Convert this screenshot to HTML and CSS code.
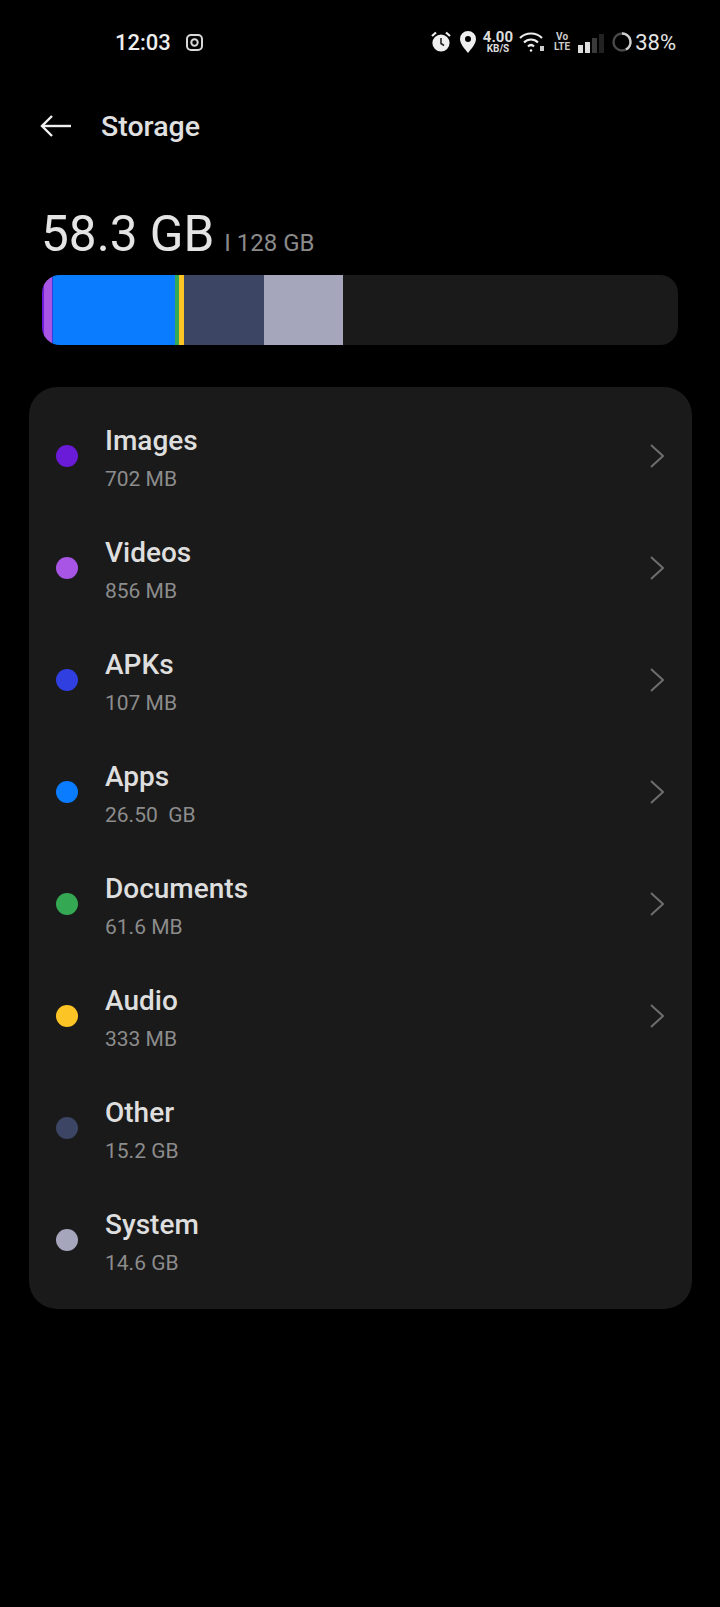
FILE: index.html
```html
<!DOCTYPE html>
<html lang="en">
<head>
    <meta charset="UTF-8">
    <meta name="viewport" content="width=device-width, initial-scale=1.0">
    <title>Storage</title>
    <link rel="stylesheet" href="styles.css">
</head>
<body>

    <div class="status-bar">
        <div class="status-left">
            <span class="clock">12:03</span>
            <svg class="insta" width="17" height="17" viewBox="0 0 17 17" fill="none" stroke="#d8d8d8" stroke-width="2"><rect x="1" y="1" width="15" height="15" rx="4"/><circle cx="8.5" cy="8.5" r="3.2"/></svg>
        </div>
        <div class="status-right">
            <svg width="24" height="24" viewBox="0 0 24 24"><path d="M3 6l4-3.5M21 6l-4-3.5" stroke="#eee" stroke-width="2.2" fill="none"/><circle cx="12" cy="13" r="8.6" fill="#eee"/><path d="M12 8v5.5l3 2" stroke="#222" stroke-width="1.6" fill="none"/></svg>
            <svg class="pin" width="18" height="24" viewBox="0 0 18 24"><path fill-rule="evenodd" fill="#eee" d="M9 1a8 8 0 0 1 8 8c0 5-5 10-8 14C6 19 1 14 1 9a8 8 0 0 1 8-8zm0 5a3 3 0 1 0 0 6 3 3 0 0 0 0-6z"/></svg>
            <div class="speed"><span>4.00</span><span class="speed-unit">KB/S</span></div>
            <svg class="wifi" width="26" height="22" viewBox="0 0 26 22" fill="none" stroke="#eee" stroke-width="2.2"><path d="M1 7c6-6 16-6 22 0"/><path d="M5 11.500c4-4 10-4 14 0"/><path d="M9 15.500c2-2 4-2 6 0"/><circle cx="12" cy="19.500" r="1.300" fill="#eee" stroke="none"/><rect x="21" y="15" width="4" height="5" fill="#ccc" stroke="none"/></svg>
            <div class="volte"><span>Vo</span><span>LTE</span></div>
            <div class="signal"><i class="s1"></i><i class="s2"></i><i class="s3"></i><i class="s4"></i></div>
            <svg class="ring" width="22" height="22" viewBox="0 0 22 22" fill="none" stroke-width="2.400"><circle cx="11" cy="11" r="8.500" stroke="#4a4a4a"/><path d="M11 2.500a8.500 8.500 0 0 1 4 16" stroke="#d0d0d0"/></svg>
            <span class="battery">38%</span>
        </div>
    </div>

    <header class="title-bar">
        <svg class="back" width="32" height="24" viewBox="0 0 32 24" fill="none" stroke="#f0f0f0" stroke-width="2.400"><path d="M31 12H3"/><path d="M12 2L2 12l10 10"/></svg>
        <h1>Storage</h1>
    </header>

    <section class="summary">
        <div class="usage"><span class="used">58.3 GB</span><span class="total">I 128 GB</span></div>
        <div class="bar">
            <i class="seg seg-images"></i>
            <i class="seg seg-videos"></i>
            <i class="seg seg-apks"></i>
            <i class="seg seg-apps"></i>
            <i class="seg seg-docs"></i>
            <i class="seg seg-audio"></i>
            <i class="seg seg-other"></i>
            <i class="seg seg-system"></i>
        </div>
    </section>

    <section class="card">
        <div class="row">
            <span class="dot seg-images"></span>
            <div class="info"><div class="name">Images</div><div class="size">702 MB</div></div>
            <svg class="chevron" width="16" height="26" viewBox="0 0 16 26" fill="none" stroke="#6e6e6e" stroke-width="2"><path d="M2 2l12 11L2 24"/></svg>
        </div>
        <div class="row">
            <span class="dot seg-videos"></span>
            <div class="info"><div class="name">Videos</div><div class="size">856 MB</div></div>
            <svg class="chevron" width="16" height="26" viewBox="0 0 16 26" fill="none" stroke="#6e6e6e" stroke-width="2"><path d="M2 2l12 11L2 24"/></svg>
        </div>
        <div class="row">
            <span class="dot seg-apks"></span>
            <div class="info"><div class="name">APKs</div><div class="size">107 MB</div></div>
            <svg class="chevron" width="16" height="26" viewBox="0 0 16 26" fill="none" stroke="#6e6e6e" stroke-width="2"><path d="M2 2l12 11L2 24"/></svg>
        </div>
        <div class="row">
            <span class="dot seg-apps"></span>
            <div class="info"><div class="name">Apps</div><div class="size">26.50&nbsp; GB</div></div>
            <svg class="chevron" width="16" height="26" viewBox="0 0 16 26" fill="none" stroke="#6e6e6e" stroke-width="2"><path d="M2 2l12 11L2 24"/></svg>
        </div>
        <div class="row">
            <span class="dot seg-docs"></span>
            <div class="info"><div class="name">Documents</div><div class="size">61.6 MB</div></div>
            <svg class="chevron" width="16" height="26" viewBox="0 0 16 26" fill="none" stroke="#6e6e6e" stroke-width="2"><path d="M2 2l12 11L2 24"/></svg>
        </div>
        <div class="row">
            <span class="dot seg-audio"></span>
            <div class="info"><div class="name">Audio</div><div class="size">333 MB</div></div>
            <svg class="chevron" width="16" height="26" viewBox="0 0 16 26" fill="none" stroke="#6e6e6e" stroke-width="2"><path d="M2 2l12 11L2 24"/></svg>
        </div>
        <div class="row">
            <span class="dot seg-other"></span>
            <div class="info"><div class="name">Other</div><div class="size">15.2 GB</div></div>
        </div>
        <div class="row">
            <span class="dot seg-system"></span>
            <div class="info"><div class="name">System</div><div class="size">14.6 GB</div></div>
        </div>
    </section>

</body>
</html>
```

FILE: styles.css
```css
body {
    margin: 0;
    height: 1607px;
    overflow: hidden;
    background-color: #000;
    color: #e8e8e8;
    font-family: Roboto, "Noto Sans", sans-serif;
}

.status-bar {
    height: 42px;
    padding: 0 44px 0 115px;
    margin-top: 21px;
    display: flex;
    align-items: center;
    justify-content: space-between;
}

.status-left, .status-right {
    display: flex;
    align-items: center;
}

.clock {
    font-size: 22px;
    font-weight: 500;
    color: #eee;
}

.insta {
    margin-left: 15px;
}

.status-right svg {
    flex: none;
}

.pin {
    margin-left: 6px;
}

.speed {
    margin-left: 6px;
    display: flex;
    flex-direction: column;
    align-items: center;
    font-size: 15px;
    font-weight: 700;
    line-height: 13px;
    color: #ddd;
}

.speed-unit {
    font-size: 10px;
    line-height: 10px;
}

.wifi {
    margin-left: 6px;
}

.volte {
    margin-left: 9px;
    display: flex;
    flex-direction: column;
    align-items: center;
    font-size: 10px;
    font-weight: 700;
    line-height: 10px;
    color: #ccc;
}

.signal {
    margin-left: 8px;
    display: flex;
    align-items: flex-end;
    gap: 2px;
    height: 19px;
    margin-top: 3px;
}

.signal i {
    display: block;
    width: 5px;
    background-color: #ddd;
}

.s1 { height: 8px; }
.s2 { height: 11px; }
.s3 { height: 15px; background-color: #3a3a3a !important; }
.s4 { height: 19px; background-color: #222 !important; }

.ring {
    margin-left: 7px;
}

.battery {
    margin-left: 2px;
    font-size: 22px;
    color: #e4e4e4;
}

.title-bar {
    height: 40px;
    margin-top: 43px;
    padding-left: 40px;
    display: flex;
    align-items: center;
}

.title-bar h1 {
    margin: 0 0 0 29px;
    font-size: 28.500px;
    font-weight: 500;
    color: #e0e0e0;
}

.summary {
    margin-top: 60px;
    padding: 0 42px;
}

.usage {
    display: flex;
    align-items: baseline;
    height: 56px;
    margin-left: -1px;
}

.used {
    font-size: 49.500px;
    color: #e4e4e4;
    line-height: 56px;
}

.total {
    margin-left: 10px;
    font-size: 24px;
    color: #8a8a8a;
}

.bar {
    margin-top: 13px;
    height: 70px;
    border-radius: 18px;
    background-color: #1a1a1a;
    overflow: hidden;
    display: flex;
}

.seg {
    display: block;
    height: 100%;
}

.bar .seg-images { width: 2px; }
.bar .seg-videos { width: 8px; }
.bar .seg-apks { width: 1px; }
.bar .seg-apps { width: 122px; }
.bar .seg-docs { width: 4px; }
.bar .seg-audio { width: 5px; }
.bar .seg-other { width: 80px; }
.bar .seg-system { width: 79px; }

.seg-images { background-color: #6a1bd8; }
.seg-videos { background-color: #a855e6; }
.seg-apks { background-color: #2f3fe0; }
.seg-apps { background-color: #0a7cff; }
.seg-docs { background-color: #35a853; }
.seg-audio { background-color: #fdc426; }
.seg-other { background-color: #3c4664; }
.seg-system { background-color: #a5a6bb; }

.card {
    margin: 42px 28px 0 29px;
    padding: 13px 0;
    border-radius: 28px;
    background-color: #1a1a1a;
}

.row {
    height: 112px;
    padding: 0 27px;
    display: flex;
    align-items: center;
    box-sizing: border-box;
}

.dot {
    width: 22px;
    height: 22px;
    border-radius: 50%;
    flex: none;
}

.info {
    margin-left: 27px;
    padding-top: 5px;
    flex: 1;
}

.name {
    font-size: 28px;
    font-weight: 500;
    line-height: 34px;
    color: #dedede;
}

.size {
    margin-top: 7px;
    font-size: 21px;
    line-height: 28px;
    color: #8c8c8c;
}
```
